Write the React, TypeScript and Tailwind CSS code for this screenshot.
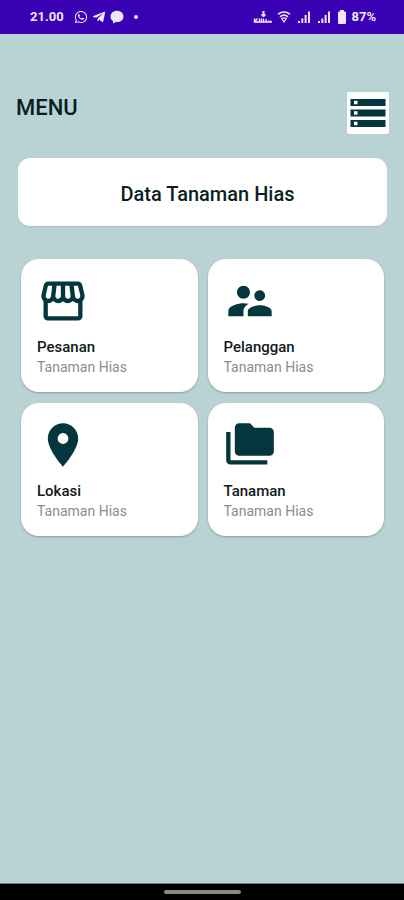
import type { IconType } from "react-icons";
import { FaTelegramPlane, FaWhatsapp } from "react-icons/fa";
import {
  MdFolderCopy,
  MdLocationOn,
  MdOutlineStorefront,
  MdStorage,
  MdSupervisorAccount,
} from "react-icons/md";

type MenuItem = {
  title: string;
  subtitle: string;
  icon: IconType;
};

const items: MenuItem[] = [
  { title: "Pesanan", subtitle: "Tanaman Hias", icon: MdOutlineStorefront },
  { title: "Pelanggan", subtitle: "Tanaman Hias", icon: MdSupervisorAccount },
  { title: "Lokasi", subtitle: "Tanaman Hias", icon: MdLocationOn },
  { title: "Tanaman", subtitle: "Tanaman Hias", icon: MdFolderCopy },
];

function ChatIcon() {
  return (
    <svg viewBox="0 0 14 14" className="size-3.5" fill="currentColor" aria-hidden="true">
      <path d="M7 .8C3.300.8.500 3.200.500 6.400c0 2 1 3.700 2.400 4.600L3.200 13.500l2.600-1.500c.4.1.8.1 1.200.1 3.700 0 6.500-2.500 6.500-5.700S10.700.8 7 .8Z" />
    </svg>
  );
}

function SpeedIcon() {
  return (
    <svg viewBox="0 0 20 14" className="h-3.5 w-5" fill="none" stroke="currentColor" aria-hidden="true">
      <path d="M10.500 1v6M8.500 5h4" strokeWidth="2" />
      <path d="M1.500 8.500v4M4.500 8.500l-2 2 2 2M6.500 8.500v4M8.500 12.500v-4M10.500 8.500v4M13 12.500V9M15.500 12.500v-2M17.500 12.500v-2" strokeWidth="1.400" />
      <path d="M1 12h18" strokeWidth="1.400" />
    </svg>
  );
}

function WifiIcon() {
  return (
    <svg viewBox="0 0 14 14" className="size-3.5" fill="none" stroke="currentColor" aria-hidden="true">
      <path d="M1 4.300c3.500-3 8.500-3 12 0M3 6.800c2.400-2 5.600-2 8 0" strokeWidth="1.600" />
      <path d="M4.700 8.600c1.400-1 3.200-1 4.600 0L7 12Z" strokeWidth="1.200" />
    </svg>
  );
}

function SignalIcon() {
  return (
    <svg viewBox="0 0 14 14" className="size-3.5" fill="currentColor" aria-hidden="true">
      <path d="M1 11h2v2H1zM4.300 8.500h2V13h-2zM7.600 5h2v8h-2zM11 1.500h2V13h-2z" />
    </svg>
  );
}

function BatteryIcon() {
  return (
    <svg viewBox="0 0 10 16" className="h-4 w-2.5" fill="currentColor" aria-hidden="true">
      <path d="M3 1h4v1.500h1a1 1 0 0 1 1 1V14a1 1 0 0 1-1 1H2a1 1 0 0 1-1-1V3.500a1 1 0 0 1 1-1h1Z" />
    </svg>
  );
}

function StatusBar() {
  return (
    <div className="flex h-[34px] items-center justify-between bg-[#3a00b3] pr-7 pl-[30px] text-[13px] font-bold text-[#eee6ff]">
      <div className="flex items-center">
        <span className="mr-2.5">21.00</span>
        <FaWhatsapp className="mr-1 size-3.5" />
        <FaTelegramPlane className="mr-1 size-3.5" />
        <ChatIcon />
        <span className="ml-2.5 size-1 rounded-full bg-current" />
      </div>
      <div className="flex items-center">
        <span className="mr-1">
          <SpeedIcon />
        </span>
        <span className="mr-1.5">
          <WifiIcon />
        </span>
        <span className="mr-1.5">
          <SignalIcon />
        </span>
        <span className="mr-1.5">
          <SignalIcon />
        </span>
        <BatteryIcon />
        <span className="ml-1 text-[13px]">87%</span>
      </div>
    </div>
  );
}

function MenuCard({ item }: { item: MenuItem }) {
  const Icon = item.icon;

  return (
    <button
      type="button"
      className="flex flex-col items-start rounded-[18px] bg-white px-4 pt-4 pb-[15px] text-left shadow-[0_1px_2px_rgba(0,0,0,0.25)]"
    >
      <Icon className="size-[52px] text-[#04363d]" />
      <span className="mt-2.5 text-[15px] leading-5 font-medium text-[#111a1b]">{item.title}</span>
      <span className="text-sm leading-5 text-[#8c8c8c]">{item.subtitle}</span>
    </button>
  );
}

export default function App() {
  return (
    <div className="flex min-h-screen flex-col bg-[#b9d2d4] font-[Roboto,sans-serif]">
      <StatusBar />

      <main className="flex-1 pt-[58px]">
        <header className="flex items-start justify-between pr-[15px] pl-4">
          <h1 className="pt-0.5 text-[22px] leading-7 font-medium text-[#0a1f22]">MENU</h1>
          <button type="button" aria-label="Data" className="rounded-xs bg-white text-[#04363d]">
            <MdStorage className="size-[42px]" />
          </button>
        </header>

        <section className="mt-6 mr-[17px] ml-[18px] rounded-xl bg-white pt-[22px] pb-[18px] pl-2.5 text-center shadow-[0_1px_1px_rgba(0,0,0,0.08)]">
          <h2 className="text-xl leading-7 font-medium text-[#0a1f22]">Data Tanaman Hias</h2>
        </section>

        <section className="mt-[33px] mr-5 ml-[21px] grid grid-cols-2 gap-x-2.5 gap-y-[11px]">
          {items.map((item) => (
            <MenuCard key={item.title} item={item} />
          ))}
        </section>
      </main>

      <div className="flex h-[17px] items-center justify-center border-t border-[#6f7d80] bg-black">
        <div className="h-1 w-[77px] rounded-full bg-[#8a8a8a]" />
      </div>
    </div>
  );
}
